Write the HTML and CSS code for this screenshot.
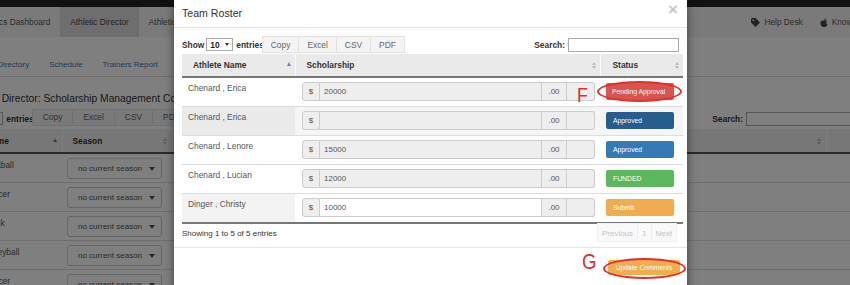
FILE: index.html
```html
<!DOCTYPE html>
<html lang="en">
<head>
  <meta charset="UTF-8">
  <meta name="viewport" content="width=device-width, initial-scale=1.0">
  <title>Athletic Director - Team Roster</title>
  <link rel="stylesheet" href="styles.css">
</head>
<body>
  <div id="page">
    <div class="topbar"></div>
    <nav class="mainnav">
      <ul class="tabs">
        <li>Athletics Dashboard</li>
        <li class="active">Athletic Director</li>
        <li>Athletic Trainer</li>
      </ul>
      <ul class="navlinks">
        <li>
          <svg width="9" height="9" viewBox="0 0 10 10"><path d="M0 1v4l5 5 5-5-5-5H1z" fill="#444"/><circle cx="2.6" cy="2.6" r="1" fill="#f5f5f5"/></svg>
          Help Desk
        </li>
        <li>
          <svg width="8" height="9" viewBox="0 0 8 10"><path d="M4 3c1-.8 2.6-.9 3.4.4C6 4.3 6.2 6.6 7.8 7 7.3 8.6 6.4 10 5.4 10 4.6 10 4.5 9.6 4 9.6S3.2 10 2.6 10C1.4 10 0 7.6 0 5.6 0 3 2.4 2.4 4 3z" fill="#444"/><path d="M4 2.6C4 1.4 5 .4 6 .3 6 1.5 5 2.5 4 2.6z" fill="#444"/></svg>
          Knowledge Base
        </li>
      </ul>
    </nav>

    <div class="subnav">
      <a>Athlete Directory</a>
      <a>Schedule</a>
      <a>Trainers Report</a>
    </div>

    <h2 class="page-title">Athletic Director: Scholarship Management Console</h2>

    <div class="page-toolbar">
      <div class="dt-left">
        <label class="dt-length">Show <span class="select-box">10</span> entries</label>
        <div class="btn-group page-btns">
          <span class="dt-btn">Copy</span><span class="dt-btn">Excel</span><span class="dt-btn">CSV</span><span class="dt-btn">PDF</span>
        </div>
      </div>
      <label class="dt-search">Search: <input type="text"></label>
    </div>

    <table class="sports">
      <thead>
        <tr>
          <th class="col-sport">Name <span class="sort-asc"></span></th>
          <th class="col-season">Season <span class="sort-both"></span></th>
          <th class="col-wide"><span class="sort-both"></span></th>
          <th class="col-last"></th>
        </tr>
      </thead>
      <tbody>
        <tr><td>Football</td><td><span class="season-select">no current season</span></td><td></td><td></td></tr>
        <tr><td>Soccer</td><td><span class="season-select">no current season</span></td><td></td><td></td></tr>
        <tr><td>Track</td><td><span class="season-select">no current season</span></td><td></td><td></td></tr>
        <tr><td>Volleyball</td><td><span class="season-select">no current season</span></td><td></td><td></td></tr>
        <tr><td>Soccer</td><td><span class="season-select">no current season</span></td><td></td><td></td></tr>
      </tbody>
    </table>
  </div>

  <div class="backdrop"></div>

  <div class="modal">
    <div class="modal-header">
      <h4>Team Roster</h4>
      <span class="close">&times;</span>
    </div>

    <div class="modal-body">
      <div class="dt-toolbar">
        <div class="dt-left">
          <label class="dt-length">Show <span class="select-box">10</span> entries</label>
          <div class="btn-group">
            <span class="dt-btn">Copy</span><span class="dt-btn">Excel</span><span class="dt-btn">CSV</span><span class="dt-btn">PDF</span>
          </div>
        </div>
        <label class="dt-search">Search: <input type="text"></label>
      </div>

      <table class="roster">
        <thead>
          <tr>
            <th class="col-name">Athlete Name <span class="sort-asc"></span></th>
            <th class="col-amount">Scholarship <span class="sort-both"></span></th>
            <th class="col-status">Status <span class="sort-both"></span></th>
          </tr>
        </thead>
        <tbody>
          <tr>
            <td class="name">Chenard , Erica</td>
            <td><div class="input-group"><span class="addon">$</span><span class="amount">20000</span><span class="addon cents">.00</span><span class="addon blank"></span></div></td>
            <td><span class="status status-pending">Pending Approval</span></td>
          </tr>
          <tr class="hover">
            <td class="name">Chenard , Erica</td>
            <td><div class="input-group"><span class="addon">$</span><span class="amount"></span><span class="addon cents">.00</span><span class="addon blank"></span></div></td>
            <td><span class="status status-approved-dark">Approved</span></td>
          </tr>
          <tr>
            <td class="name">Chenard , Lenore</td>
            <td><div class="input-group"><span class="addon">$</span><span class="amount">15000</span><span class="addon cents">.00</span><span class="addon blank"></span></div></td>
            <td><span class="status status-approved">Approved</span></td>
          </tr>
          <tr>
            <td class="name">Chenard , Lucian</td>
            <td><div class="input-group"><span class="addon">$</span><span class="amount">12000</span><span class="addon cents">.00</span><span class="addon blank"></span></div></td>
            <td><span class="status status-funded">FUNDED</span></td>
          </tr>
          <tr class="last">
            <td class="name sorted">Dinger , Christy</td>
            <td><div class="input-group"><span class="addon">$</span><span class="amount editable">10000</span><span class="addon cents">.00</span><span class="addon blank"></span></div></td>
            <td><span class="status status-submit">Submit</span></td>
          </tr>
        </tbody>
      </table>

      <div class="dt-footer">
        <div class="dt-info">Showing 1 to 5 of 5 entries</div>
        <ul class="pagination">
          <li>Previous</li>
          <li>1</li>
          <li>Next</li>
        </ul>
      </div>
    </div>

    <div class="modal-footer">
      <span class="btn-update">Update Comments</span>
    </div>

    <!-- callout marks -->
    <span class="mark mark-f">F</span>
    <span class="ring ring-f"></span>
    <span class="mark mark-g">G</span>
    <span class="ring ring-g"></span>
  </div>
</body>
</html>
```

FILE: styles.css
```css
* {
  margin: 0;
  padding: 0;
  box-sizing: border-box;
}

body {
  font-family: "Liberation Sans", Arial, sans-serif;
  font-size: 8.4px;
  color: #333;
  background-color: #fff;
  width: 850px;
  height: 285px;
  overflow: hidden;
  position: relative;
}

ul {
  list-style: none;
}

/* ---------- page behind the dialog ---------- */
#page {
  width: 850px;
  overflow: hidden;
}

.topbar {
  height: 7px;
  background-color: #222;
}

.mainnav {
  height: 30px;
  background-color: #f5f5f5;
  display: flex;
  justify-content: space-between;
}

.tabs {
  display: flex;
  margin-left: -34px;
}

.tabs li {
  padding: 0 10px;
  line-height: 30px;
  font-size: 8.3px;
  color: #555;
  white-space: nowrap;
}

.tabs li.active {
  background-color: #ddd;
  color: #444;
}

.navlinks {
  display: flex;
  gap: 17px;
  margin-right: -44px;
}

.navlinks li {
  display: flex;
  align-items: center;
  gap: 4px;
  font-size: 8.3px;
  color: #555;
  white-space: nowrap;
}

.subnav {
  height: 40px;
  display: flex;
  align-items: flex-end;
  gap: 20px;
  padding-bottom: 7px;
  margin-left: -30px;
  border-bottom: 1px solid #ddd;
}

.subnav a {
  font-size: 8px;
  color: #337ab7;
  white-space: nowrap;
}

.page-title {
  height: 32px;
  padding-top: 14px;
  margin-left: -35px;
  font-size: 10.3px;
  line-height: 16px;
  font-weight: normal;
  color: #333;
  white-space: nowrap;
}

.page-toolbar {
  height: 19px;
  margin-bottom: 1px;
  margin-left: -48px;
  display: flex;
  justify-content: space-between;
  align-items: center;
}

.page-toolbar .dt-btn {
  height: 17px;
  line-height: 15px;
  padding: 0 10px;
}

.page-toolbar .dt-search input {
  width: 120px;
  height: 14px;
  margin-right: -19px;
}

.sports {
  border-collapse: collapse;
  margin-left: -22px;
  width: 900px;
  table-layout: fixed;
}

.sports th {
  height: 24px;
  background-color: #eee;
  border-bottom: 2px solid #555;
  border-left: 1px solid #fff;
  text-align: left;
  font-weight: bold;
  padding: 0 10px;
  position: relative;
}

.sports .col-sport { width: 84px; border-left: none; padding-left: 8px; }
.sports .col-season { width: 110px; }
.sports .col-wide { width: 654px; }

.sports th .sort-asc,
.sports th .sort-both {
  position: absolute;
  right: 5px;
  top: 9px;
}

.sports td {
  height: 29px;
  border-top: 1px solid #ddd;
  padding: 4px 6px 3px;
  vertical-align: top;
  color: #555;
}

.sports td:first-child {
  padding-top: 6px;
}

.season-select {
  display: flex;
  justify-content: space-between;
  align-items: center;
  width: 95px;
  height: 21px;
  padding: 0 6px 0 10px;
  border: 1px solid #ccc;
  border-radius: 3px;
  background-color: #fff;
  color: #555;
  font-size: 8px;
  white-space: nowrap;
  margin-left: -1px;
}

.season-select::after {
  content: "";
  border: 3px solid transparent;
  border-top: 4px solid #555;
  border-bottom: none;
}

/* ---------- backdrop and dialog ---------- */
.backdrop {
  position: absolute;
  inset: 0;
  background-color: rgba(0, 0, 0, 0.5);
}

.modal {
  position: absolute;
  left: 174px;
  top: 0;
  width: 513px;
  height: 300px;
  background-color: #fff;
  box-shadow: 0 3px 9px rgba(0, 0, 0, 0.5);
}

.modal-header {
  height: 28px;
  padding: 0 8px;
  border-bottom: 1px solid #e5e5e5;
  display: flex;
  justify-content: space-between;
  align-items: center;
}

.modal-header h4 {
  font-size: 10.6px;
  font-weight: normal;
  color: #333;
  margin-top: -2px;
}

.close {
  font-size: 17px;
  font-weight: bold;
  color: #c8c8c8;
  margin-top: -8px;
  margin-right: 1px;
}

.modal-body {
  padding: 8px 5px 0 8px;
  height: 220px;
  border-bottom: 1px solid #e5e5e5;
}

.dt-toolbar {
  height: 17px;
  margin-bottom: 1px;
  display: flex;
  justify-content: space-between;
  align-items: center;
}

.dt-left {
  display: flex;
  align-items: center;
  height: 100%;
}

.dt-length,
.dt-search {
  font-weight: bold;
  color: #333;
  display: flex;
  align-items: center;
  white-space: nowrap;
}

.dt-length {
  margin-right: -2px;
}

.select-box {
  display: inline-flex;
  align-items: center;
  justify-content: space-between;
  width: 27px;
  height: 13px;
  margin: 0 3px 0 2px;
  padding: 0 3px;
  border: 1px solid #aaa;
  background-color: #fff;
  font-weight: bold;
  color: #222;
}

.select-box::after {
  content: "";
  border: 2px solid transparent;
  border-top: 3px solid #333;
  border-bottom: none;
}

.btn-group {
  display: flex;
  height: 100%;
}

.dt-btn {
  height: 17px;
  line-height: 16px;
  padding: 0 8px;
  background-color: #f4f4f4;
  border: 1px solid #e2e2e2;
  margin-left: -1px;
  color: #666;
  font-size: 8.4px;
}

.dt-btn:first-child {
  margin-left: 0;
}

.dt-search {
  margin-right: 3px;
}

.dt-search input {
  width: 111px;
  height: 14px;
  margin-left: 3px;
  border: 1px solid #aaa;
  background-color: #fff;
}

.roster {
  width: 501px;
  border-collapse: collapse;
  table-layout: fixed;
}

.roster th {
  height: 23px;
  background-color: #eaeaea;
  border-bottom: 2px solid #777;
  border-left: 1px solid #fafafa;
  text-align: left;
  font-weight: bold;
  color: #333;
  position: relative;
}

.roster .col-name { width: 113px; padding-left: 11px; border-left: none; }
.roster .col-amount { width: 305px; padding-left: 11px; }
.roster .col-status { padding-left: 12px; }

.sort-asc {
  position: absolute;
  right: 4px;
  top: 8px;
  border: 2.5px solid transparent;
  border-bottom: 4px solid #7b7bc4;
  border-top: none;
}

.sort-both {
  position: absolute;
  right: 4px;
  top: 8px;
  width: 4px;
  height: 7px;
}

.sort-both::before,
.sort-both::after {
  content: "";
  position: absolute;
  left: 0;
  border: 2px solid transparent;
}

.sort-both::before {
  top: 0;
  border-bottom: 3px solid #bbb;
  border-top: none;
}

.sort-both::after {
  bottom: 0;
  border-top: 3px solid #bbb;
  border-bottom: none;
}

.roster td {
  height: 29px;
  border-top: 1px solid #ddd;
  vertical-align: top;
  padding: 4px 5px 5px 7px;
  background-color: #fff;
}

.roster td.name {
  padding: 5px 6px;
  color: #555;
}

.roster tr.hover td {
  background-color: #f5f5f5;
}

.roster tr.hover td.name {
  background-color: #eaeaea;
}

.roster td.sorted {
  background-color: #f3f3f3;
}

.roster tr.last td {
  border-bottom: 2px solid #777;
}

.input-group {
  display: flex;
  height: 19px;
}

.input-group .addon,
.input-group .amount {
  border: 1px solid #ccc;
  background-color: #eee;
  color: #555;
  line-height: 17px;
  font-size: 8px;
}

.input-group .addon {
  width: 18px;
  text-align: center;
}

.input-group .addon:first-child {
  border-radius: 3px 0 0 3px;
}

.input-group .amount {
  flex: 1;
  padding-left: 4px;
  border-left: none;
  border-right: none;
}

.input-group .amount.editable {
  background-color: #fff;
}

.input-group .cents {
  width: 26px;
}

.input-group .blank {
  width: 28px;
  border-left: none;
  border-radius: 0 3px 3px 0;
}

.roster td:last-child {
  padding: 5px 9px 0 6px;
}

.status {
  display: block;
  height: 17px;
  line-height: 17px;
  padding: 0 7px;
  border-radius: 2px;
  font-size: 6.8px;
  color: #fff;
  white-space: nowrap;
}

.status-pending { background-color: #d9534f; padding-left: 6px; }
.status-approved-dark { background-color: #265d8d; }
.status-approved { background-color: #337ab7; }
.status-funded { background-color: #5cb85c; }
.status-submit { background-color: #f0ad4e; }

.dt-footer {
  display: flex;
  justify-content: space-between;
  align-items: flex-start;
  margin-right: 5px;
}

.dt-info {
  padding-top: 5px;
  color: #333;
  font-size: 8px;
}

.pagination {
  display: flex;
  height: 19px;
  margin-top: -1px;
}

.pagination li {
  line-height: 19px;
  padding: 0 4px;
  color: #c4c4c4;
  background-color: #f9f9f9;
  border: 1px solid #f0f0f0;
  margin-left: -1px;
  font-size: 8px;
}

.modal-footer {
  display: flex;
  justify-content: flex-end;
  padding: 12px 7px 0 0;
}

.btn-update {
  width: 72px;
  height: 15px;
  line-height: 15px;
  text-align: center;
  background-color: #f0ad4e;
  border-radius: 2px;
  color: #fff;
  font-size: 6.8px;
  white-space: nowrap;
}

/* annotation marks drawn over the dialog */
.mark {
  position: absolute;
  color: #e0302c;
  line-height: 1;
}

.mark-f {
  left: 403px;
  top: 84px;
  font-size: 21px;
  transform: scaleX(0.85);
  transform-origin: left;
}

.mark-g {
  left: 408px;
  top: 251px;
  font-size: 22px;
  transform: scaleX(0.85);
  transform-origin: left;
}

.ring {
  position: absolute;
  border: 2.5px solid #e0302c;
  border-radius: 50%;
}

.ring-f {
  left: 423px;
  top: 81px;
  width: 85px;
  height: 21px;
}

.ring-g {
  left: 429px;
  top: 258px;
  width: 83px;
  height: 21px;
}
```
